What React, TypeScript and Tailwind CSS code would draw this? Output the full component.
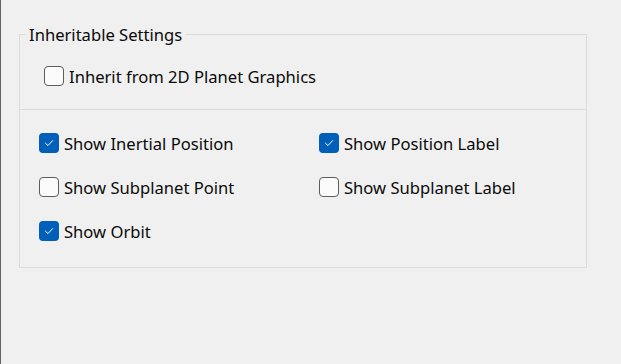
import React from "react";

const font = { fontFamily: '"Segoe UI", "Noto Sans", "Open Sans", sans-serif' };

const CheckBox = ({ checked, label }: { checked: boolean; label: string }) => (
  <label className="flex items-center gap-[5px] h-[20px]">
    {checked ? (
      <span className="flex items-center justify-center w-[20px] h-[20px] rounded-[4px] bg-[#005fb8]">
        <svg width="12" height="12" viewBox="0 0 12 12" fill="none">
          <path d="M2.5 6.2 L5 8.6 L9.6 3.6" stroke="white" strokeWidth="1" strokeLinecap="round" strokeLinejoin="round" />
        </svg>
      </span>
    ) : (
      <span className="w-[20px] h-[20px] rounded-[4px] border border-[#5d5d5d] bg-[#fbfbfb]" />
    )}
    <span className="text-[16.6px] text-[#0a0a0a] leading-none whitespace-nowrap pt-[3px]">{label}</span>
  </label>
);

export default function App() {
  return (
    <div className="w-[621px] h-[364px] bg-[#f0f0f0] border-l border-[#646464] pt-[34px] pl-[18px]" style={font}>
      <div className="relative w-[568px] h-[234px] border border-[#dcdcdc] flex flex-col">
        <span className="absolute left-[6px] top-[-10px] px-[3px] bg-[#f0f0f0] text-[16.6px] text-[#0a0a0a] leading-[20px]">
          Inheritable Settings
        </span>
        <div className="h-[75px] border-b border-[#dcdcdc] pl-[24px] pt-[31px]">
          <CheckBox checked={false} label="Inherit from 2D Planet Graphics" />
        </div>
        <div className="grid grid-cols-[280px_1fr] gap-y-[24px] pl-[19px] pt-[23px]">
          <CheckBox checked label="Show Inertial Position" />
          <CheckBox checked label="Show Position Label" />
          <CheckBox checked={false} label="Show Subplanet Point" />
          <CheckBox checked={false} label="Show Subplanet Label" />
          <CheckBox checked label="Show Orbit" />
        </div>
      </div>
    </div>
  );
}
